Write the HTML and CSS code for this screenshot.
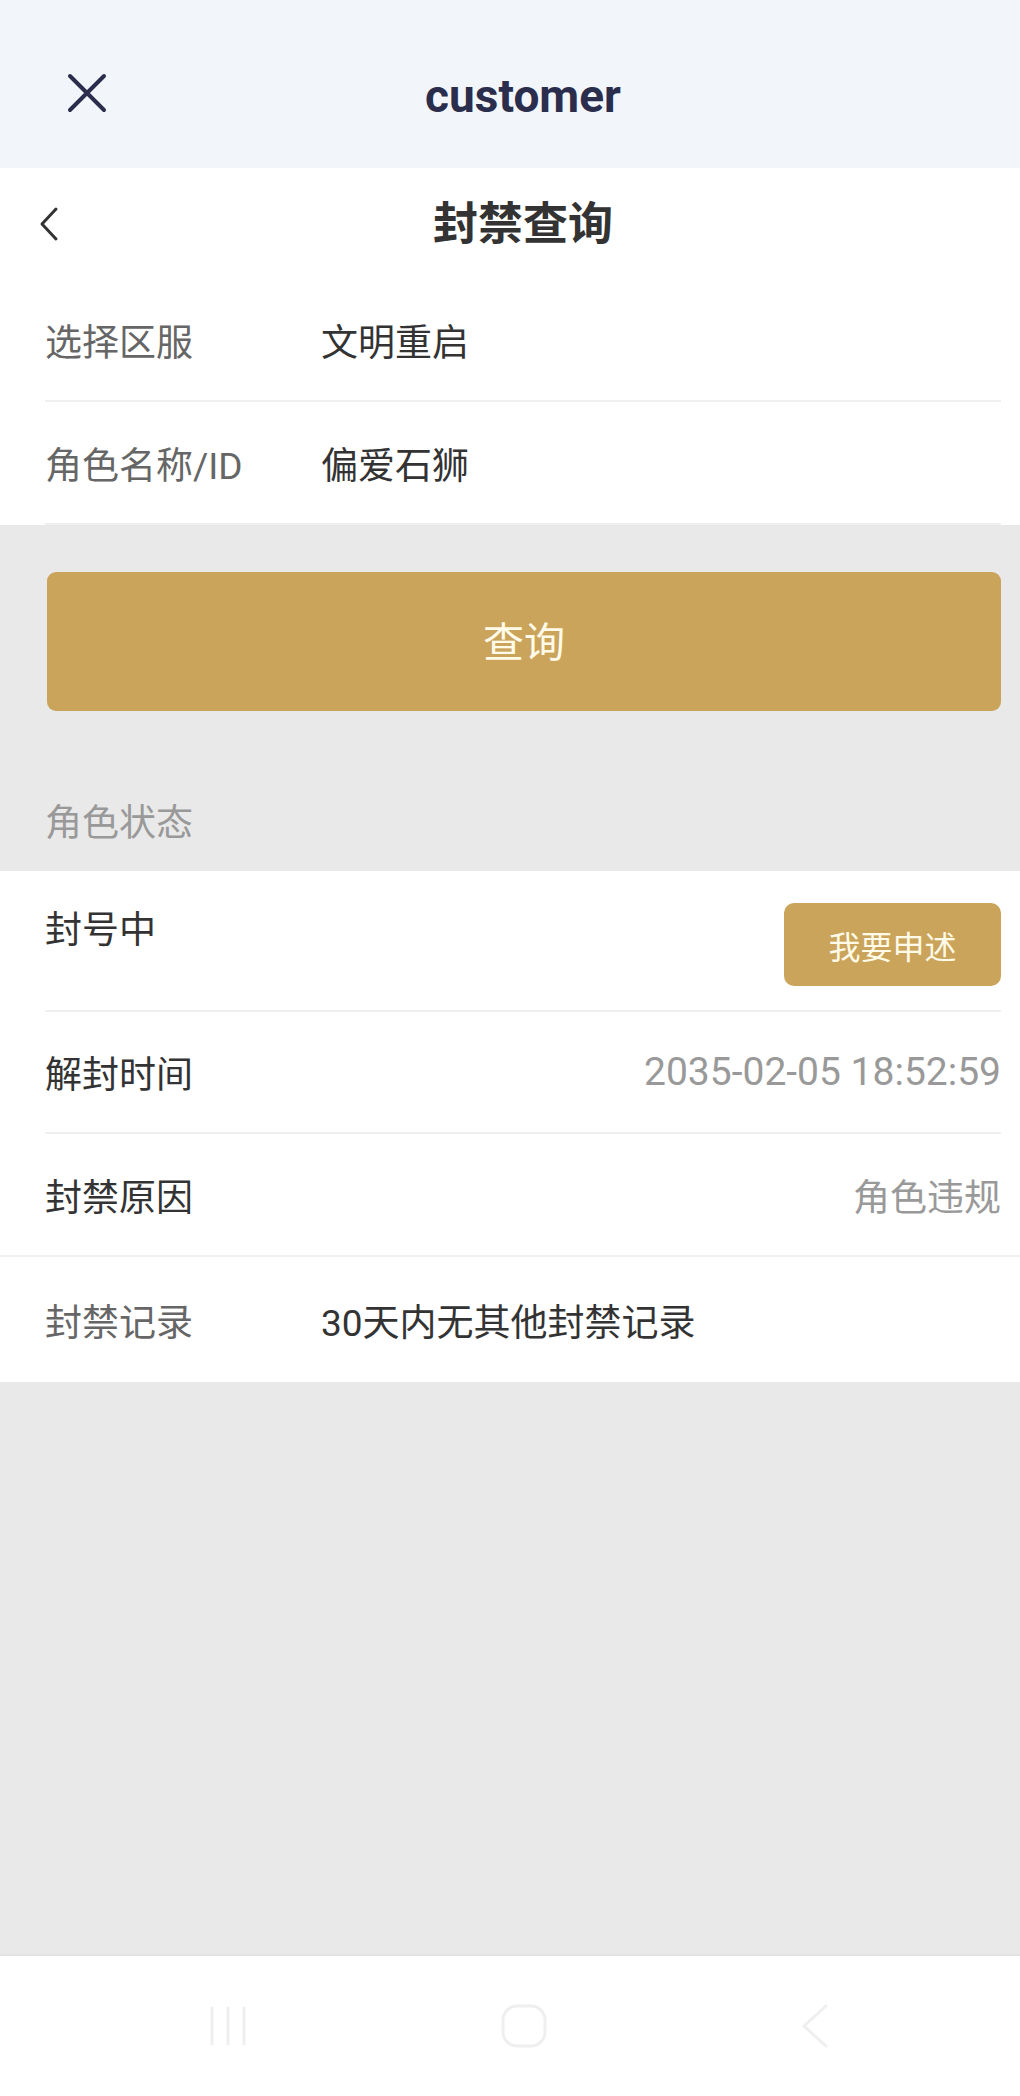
FILE: index.html
```html
<!DOCTYPE html>
<html lang="zh-CN">
<head>
    <meta charset="UTF-8">
    <meta name="viewport" content="width=device-width, initial-scale=1.0">
    <title>封禁查询</title>
    <link rel="stylesheet" href="styles.css">
</head>
<body>
    <div class="app">
        <header class="top-bar">
            <span class="close-btn">
                <svg width="40" height="40" viewBox="0 0 40 40">
                    <path d="M3 3 L37 37 M37 3 L3 37" stroke="#2b2d4c" stroke-width="4" stroke-linecap="round" fill="none"/>
                </svg>
            </span>
            <h1 class="app-title">customer</h1>
        </header>

        <nav class="page-bar">
            <span class="back-btn">
                <svg width="24" height="36" viewBox="0 0 24 36">
                    <path d="M18 3 L4 18 L18 33" stroke="#333" stroke-width="3" stroke-linecap="round" stroke-linejoin="round" fill="none"/>
                </svg>
            </span>
            <h2 class="page-title">封禁查询</h2>
        </nav>

        <section class="form-box">
            <div class="row">
                <span class="label">选择区服</span>
                <span class="value">文明重启</span>
            </div>
            <div class="row">
                <span class="label">角色名称/ID</span>
                <span class="value">偏爱石狮</span>
            </div>
        </section>

        <div class="action">
            <button class="query-btn">查询</button>
        </div>

        <div class="section-title">角色状态</div>

        <section class="status-box">
            <div class="row row-top">
                <span class="label dark">封号中</span>
                <button class="appeal-btn">我要申述</button>
            </div>
            <div class="row">
                <span class="label dark">解封时间</span>
                <span class="value muted date">2035-02-05 18:52:59</span>
            </div>
            <div class="row row-full">
                <span class="label dark">封禁原因</span>
                <span class="value muted">角色违规</span>
            </div>
            <div class="row last">
                <span class="label">封禁记录</span>
                <span class="value">30天内无其他封禁记录</span>
            </div>
        </section>

        <div class="filler"></div>

        <footer class="sys-nav">
            <svg width="44" height="44" viewBox="0 0 44 44">
                <path d="M6 4 V40 M22 4 V40 M38 4 V40" stroke="#efefef" stroke-width="3" stroke-linecap="round" fill="none"/>
            </svg>
            <svg width="48" height="46" viewBox="0 0 48 46">
                <rect x="3" y="3" width="42" height="40" rx="14" stroke="#efefef" stroke-width="3" fill="none"/>
            </svg>
            <svg width="32" height="46" viewBox="0 0 32 46">
                <path d="M28 3 L6 23 L28 43" stroke="#efefef" stroke-width="3" stroke-linecap="round" stroke-linejoin="round" fill="none"/>
            </svg>
        </footer>
    </div>
</body>
</html>
```

FILE: styles.css
```css
* {
    box-sizing: border-box;
}
body {
    margin: 0;
    font-family: Roboto, "Noto Sans CJK SC", sans-serif;
    background-color: #e9e9e9;
    color: #333;
}
.app {
    width: 1020px;
    min-height: 2096px;
    display: flex;
    flex-direction: column;
}
.top-bar {
    height: 168px;
    background-color: #f2f5f9;
    display: flex;
    align-items: center;
    padding-left: 67px;
    position: relative;
}
.close-btn {
    display: flex;
    width: 40px;
    height: 40px;
    margin-top: 18px;
}
.app-title {
    position: absolute;
    left: 26px;
    right: 0;
    top: 66px;
    text-align: center;
    margin: 0;
    font-size: 46px;
    line-height: 60px;
    font-weight: 700;
    color: #2b2d4c;
    pointer-events: none;
}
.page-bar {
    height: 112px;
    background-color: #fff;
    display: flex;
    align-items: center;
    padding-left: 38px;
    position: relative;
}
.back-btn {
    display: flex;
}
.page-title {
    position: absolute;
    left: 26px;
    right: 0;
    top: 27px;
    text-align: center;
    margin: 0;
    font-size: 45px;
    line-height: 60px;
    font-weight: 700;
    color: #333;
}
.form-box,
.status-box {
    background-color: #fff;
}
.row {
    height: 122px;
    margin: 0 19px 0 45px;
    display: flex;
    align-items: center;
    border-bottom: 2px solid #efefef;
    font-size: 37px;
}
.form-box .row:last-child {
    height: 123px;
}
.label {
    width: 276px;
    flex-shrink: 0;
    color: #666;
}
.label.dark {
    color: #333;
}
.value {
    color: #333;
}
.value.muted {
    margin-left: auto;
    color: #999;
}
.value.date {
    font-size: 39px;
}
.action {
    padding: 47px 19px 0 47px;
}
.query-btn {
    width: 100%;
    height: 139px;
    border: none;
    border-radius: 9px;
    background-color: #cba45b;
    color: #fffbe8;
    font-family: "Noto Sans CJK SC", sans-serif;
    font-size: 41px;
    padding-bottom: 6px;
}
.section-title {
    padding: 88px 0 22px 45px;
    font-size: 37px;
    line-height: 50px;
    color: #999;
}
.row-top {
    height: 141px;
    align-items: flex-start;
    padding-top: 32px;
}
.row-top .label {
    line-height: 56px;
}
.appeal-btn {
    margin-left: auto;
    width: 217px;
    height: 83px;
    border: none;
    border-radius: 10px;
    background-color: #cba45b;
    color: #fffbe8;
    font-family: "Noto Sans CJK SC", sans-serif;
    font-size: 32px;
}
.row-full {
    height: 123px;
    margin: 0;
    padding: 0 19px 0 45px;
}
.row.last {
    height: 125px;
    border-bottom: none;
}
.filler {
    flex: 1;
}
.sys-nav {
    height: 142px;
    background-color: #fff;
    border-top: 2px solid #e2e2e2;
    display: flex;
    align-items: center;
    justify-content: space-between;
    padding: 0 190px 0 206px;
}
```
